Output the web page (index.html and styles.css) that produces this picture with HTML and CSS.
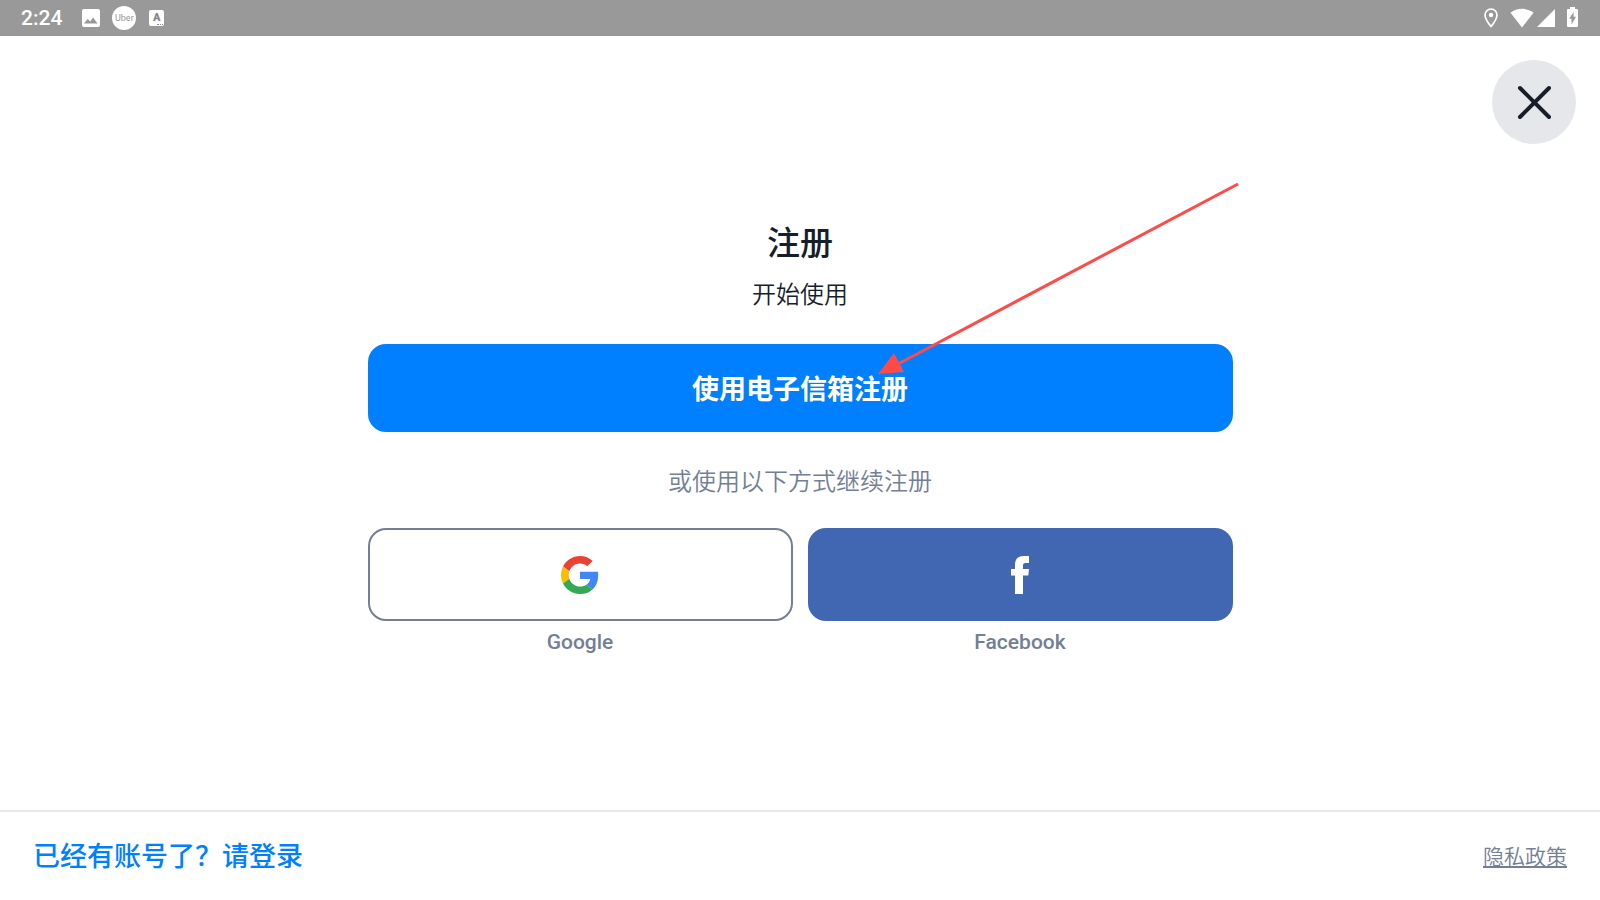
FILE: index.html
```html
<!DOCTYPE html>
<html lang="zh-CN">
  <head>
    <meta charset="UTF-8" />
    <meta name="viewport" content="width=device-width, initial-scale=1.0" />
    <title>注册</title>
    <link rel="stylesheet" href="styles.css">
  </head>
  <body>
    <div class="status-bar">
      <div class="status-left">
        <span class="clock">2:24</span>
        <svg class="icon-image" width="18" height="18" viewBox="0 0 18 18">
          <path fill="#fff" fill-rule="evenodd" d="M2 0h14a2 2 0 0 1 2 2v14a2 2 0 0 1-2 2H2a2 2 0 0 1-2-2V2a2 2 0 0 1 2-2zM2 14.500h13.500L11.200 8.600 8.200 12.500 5.700 10z" />
        </svg>
        <span class="uber">Uber</span>
        <span class="badge-a">A<i></i></span>
      </div>
      <div class="status-right">
        <svg class="icon-pin" width="14" height="20" viewBox="0 0 14 20">
          <path fill="none" stroke="#fff" stroke-width="1.700" d="M7 1a6 6 0 0 0-6 6c0 4.300 6 11.500 6 11.500S13 11.300 13 7a6 6 0 0 0-6-6z" />
          <circle cx="7" cy="7" r="2.200" fill="#fff" />
        </svg>
        <svg class="icon-wifi" width="24" height="20" viewBox="0 0 24 20">
          <path fill="#fff" d="M12 19.500L.500 4.700C3.800 2 7.700.800 12 .800S20.200 2 23.500 4.700z" />
        </svg>
        <svg class="icon-signal" width="18" height="18" viewBox="0 0 18 18">
          <path fill="#fff" d="M0 18L18 0v18z" />
        </svg>
        <svg class="icon-battery" width="11" height="20" viewBox="0 0 11 20">
          <path fill="#fff" fill-rule="evenodd" d="M3 0h5v2h2q1 0 1 1v16q0 1-1 1H1q-1 0-1-1V3q0-1 1-1h2zM6.600 5L2.200 11.800h2.300V17.500L9 9.800H6.600z" />
        </svg>
      </div>
    </div>

    <header class="top">
      <button class="close" aria-label="关闭">
        <svg width="34" height="34" viewBox="0 0 34 34">
          <path stroke="#171d29" stroke-width="4" stroke-linecap="round" d="M3 3l29 29M32 3L3 32" />
        </svg>
      </button>
    </header>

    <main class="signup">
      <h1>注册</h1>
      <p class="subtitle">开始使用</p>
      <div class="email-row">
        <button class="email-button">使用电子信箱注册</button>
        <svg class="arrow" width="362" height="194" viewBox="0 0 362 194">
          <path stroke="#ff4a4a" stroke-width="3" d="M360 2L20 182" />
          <path fill="#ff4a4a" d="M0 192L16 171 26 190z" />
        </svg>
      </div>
      <p class="or">或使用以下方式继续注册</p>
      <div class="socials">
        <div class="social">
          <button class="google" id="google" aria-labelledby="google-label">
            <svg width="38" height="38" viewBox="0 0 48 48">
              <path fill="#ea4335" d="M24 9.500c3.540 0 6.710 1.220 9.210 3.600l6.850-6.850C35.900 2.380 30.470 0 24 0 14.620 0 6.510 5.380 2.560 13.220l7.980 6.190C12.430 13.720 17.740 9.500 24 9.500z" />
              <path fill="#4285f4" d="M46.980 24.550c0-1.570-.150-3.090-.380-4.550H24v9.020h12.940c-.580 2.960-2.260 5.480-4.780 7.180l7.730 6c4.510-4.180 7.090-10.360 7.090-17.650z" />
              <path fill="#fbbc05" d="M10.530 28.590c-.480-1.450-.760-2.990-.760-4.590s.270-3.140.760-4.590l-7.980-6.190C.920 16.460 0 20.120 0 24c0 3.880.920 7.540 2.560 10.780l7.970-6.190z" />
              <path fill="#34a853" d="M24 48c6.480 0 11.930-2.130 15.890-5.810l-7.730-6c-2.150 1.450-4.920 2.300-8.160 2.300-6.260 0-11.570-4.220-13.470-9.910l-7.980 6.190C6.510 42.620 14.620 48 24 48z" />
            </svg>
          </button>
          <label id="google-label" for="google">Google</label>
        </div>
        <div class="social">
          <button class="facebook" id="facebook" aria-labelledby="facebook-label">
            <svg width="18" height="38" viewBox="0 0 18 38">
              <path fill="#fff" d="M4 38V19.500H0V13h4V9C4 3 7 0 12.500 0H18v7h-3.500C12.500 7 12 8 12 9.500V13h6l-.700 6.500H12V38z" />
            </svg>
          </button>
          <label id="facebook-label" for="facebook">Facebook</label>
        </div>
      </div>
    </main>

    <footer>
      <a class="login" href="#">已经有账号了？请登录</a>
      <a class="privacy" href="#">隐私政策</a>
    </footer>
  </body>
</html>
```
FILE: styles.css
```css
* {
  box-sizing: border-box;
}

body {
  margin: 0;
  min-height: 100vh;
  display: flex;
  flex-direction: column;
  font-family: Roboto, "Noto Sans CJK SC", sans-serif;
  color: #171d29;
  background-color: #fff;
}

button {
  display: flex;
  align-items: center;
  justify-content: center;
  padding: 0;
  border: none;
  font-family: inherit;
  cursor: pointer;
}

/* Status bar */
.status-bar {
  display: flex;
  justify-content: space-between;
  height: 36px;
  padding: 0 22px 0 21px;
  background-color: #999;
  color: #fff;
}

.status-left,
.status-right {
  display: flex;
  align-items: center;
}

.clock {
  margin-right: 20px;
  font-size: 21px;
  font-weight: 500;
}

.uber {
  width: 24px;
  height: 24px;
  margin: 0 13px 0 12px;
  border-radius: 50%;
  background-color: #fff;
  color: #999;
  font-size: 9px;
  line-height: 24px;
  text-align: center;
}

.badge-a {
  position: relative;
  width: 15px;
  height: 16px;
  border-radius: 2px;
  background-color: #fff;
  color: #888;
  font-size: 11px;
  font-weight: 900;
  line-height: 16px;
  text-align: center;
}

.badge-a i {
  position: absolute;
  right: 1px;
  bottom: 1px;
  width: 6px;
  border-bottom: 1px dotted #888;
}

.icon-wifi {
  margin: 0 3px 0 12px;
}

.icon-battery {
  margin-left: 12px;
  margin-bottom: 2px;
}

/* Close */
.top {
  display: flex;
  justify-content: flex-end;
  padding: 24px 24px 0;
}

.close {
  width: 84px;
  height: 84px;
  border-radius: 50%;
  background-color: #e5e7eb;
}

/* Sign up */
.signup {
  flex: 1;
  width: 100%;
  max-width: 865px;
  margin: 0 auto;
  padding-top: 80px;
  text-align: center;
}

h1 {
  margin: 0 0 15px;
  font-size: 33px;
  font-weight: 500;
  line-height: 40px;
}

.subtitle,
.or {
  margin: 0;
  font-size: 24px;
  font-weight: 350;
  line-height: 32px;
}

.or {
  margin: 34px 0 30px;
  color: #747e94;
}

.email-row {
  position: relative;
  margin-top: 33px;
}

.email-button {
  width: 100%;
  height: 88px;
  padding-bottom: 2px;
  border-radius: 18px;
  background-color: #007fff;
  color: #fff;
  font-size: 27px;
  font-weight: 700;
}

.arrow {
  position: absolute;
  left: 510px;
  bottom: 56px;
  pointer-events: none;
}

.socials {
  display: flex;
  gap: 15px;
}

.social {
  flex: 1;
}

.social button {
  width: 100%;
  height: 93px;
  margin-bottom: 7px;
  border-radius: 18px;
}

.google {
  border: 2px solid #747e94;
  background-color: #fff;
}

.facebook {
  background-color: #4267b2;
}

.social label {
  color: #747e94;
  font-size: 21px;
  font-weight: 500;
  line-height: 28px;
}

/* Footer */
footer {
  display: flex;
  align-items: center;
  justify-content: space-between;
  height: 90px;
  padding: 0 33px 3px;
  border-top: 2px solid #e5e7eb;
}

.login {
  color: #007fff;
  font-size: 27px;
  font-weight: 500;
  text-decoration: none;
}

.privacy {
  color: #747e94;
  font-size: 21px;
  font-weight: 350;
}
```
